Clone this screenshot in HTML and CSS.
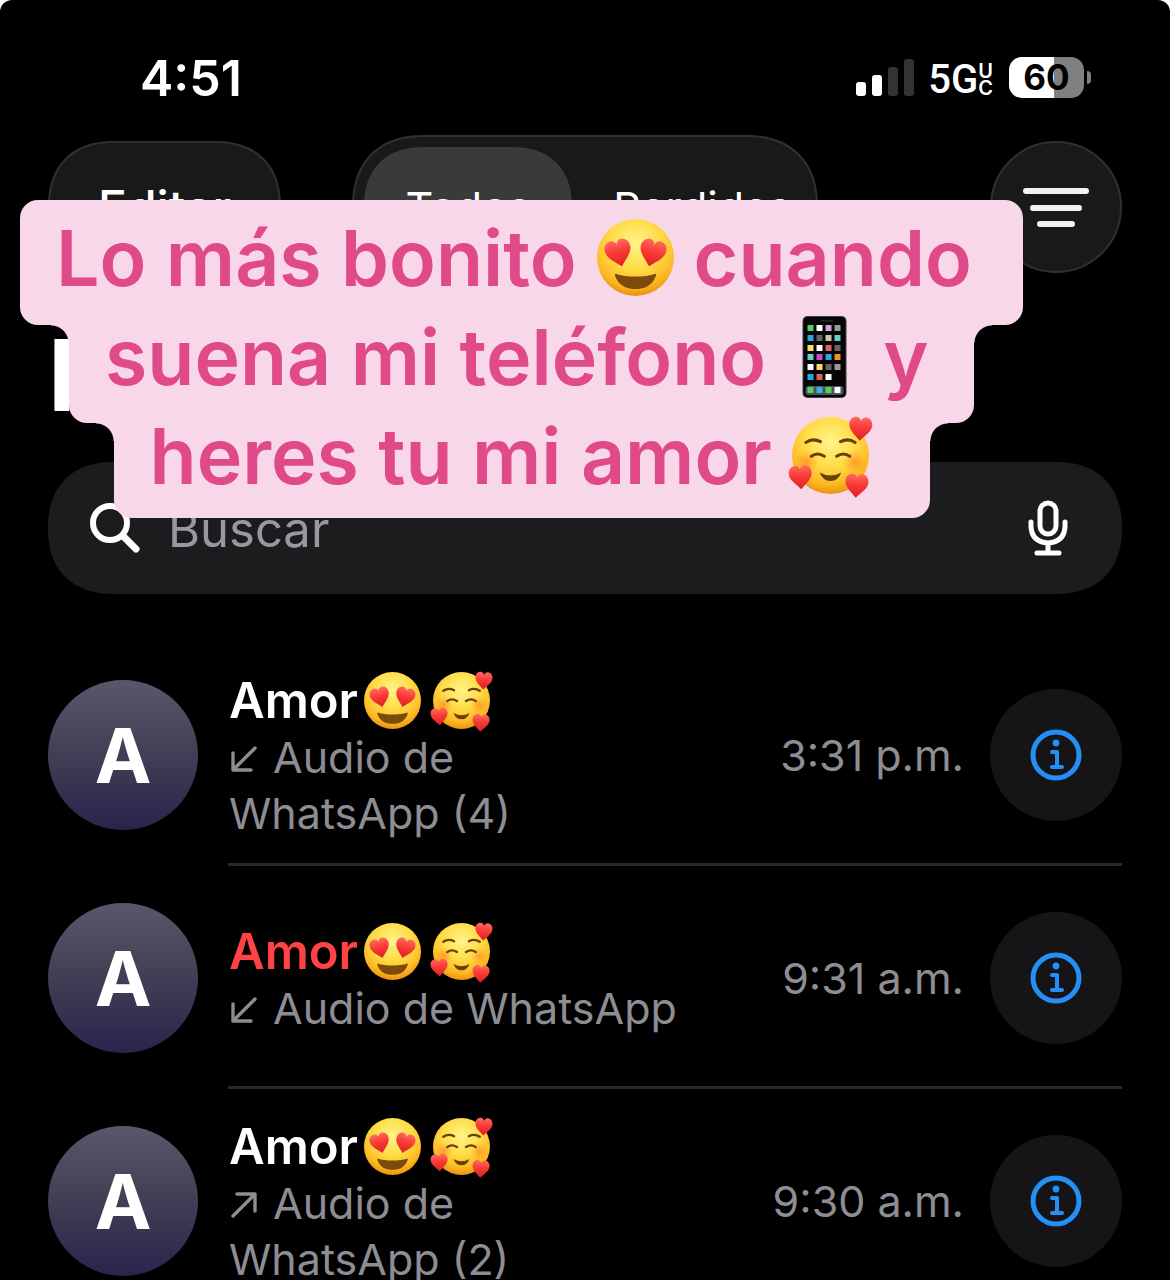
FILE: index.html
```html
<!DOCTYPE html>
<html lang="es">
<head>
    <meta charset="UTF-8">
    <meta name="viewport" content="width=device-width, initial-scale=1.0">
    <title>Recientes</title>
    <link rel="stylesheet" href="styles.css">
</head>
<body>
    <!-- Shared icons -->
    <svg class="sprite" aria-hidden="true">
        <defs>
            <radialGradient id="face" cx="50%" cy="32%" r="68%">
                <stop offset="0" stop-color="#fff48a"/>
                <stop offset="0.5" stop-color="#ffdb45"/>
                <stop offset="0.82" stop-color="#fdb822"/>
                <stop offset="1" stop-color="#e9920f"/>
            </radialGradient>
            <linearGradient id="heart-fill" x1="0" y1="0" x2="0" y2="1">
                <stop offset="0" stop-color="#ff6a62"/>
                <stop offset="0.45" stop-color="#f93a35"/>
                <stop offset="1" stop-color="#dc1f26"/>
            </linearGradient>
            <radialGradient id="blush">
                <stop offset="0" stop-color="#ff7a1c" stop-opacity="0.6"/>
                <stop offset="1" stop-color="#ff8a1c" stop-opacity="0"/>
            </radialGradient>
            <path id="heart" d="M0 18C-6 11-17 4-17-6C-17-13-12-17-7-17C-4-17-1-15 0-11C1-15 4-17 7-17C12-17 17-13 17-6C17 4 6 11 0 18Z" fill="url(#heart-fill)"/>
        </defs>
        <symbol id="heart-eyes" viewBox="0 0 100 100">
            <circle cx="50" cy="50" r="50" fill="url(#face)"/>
            <use href="#heart" transform="translate(28 44) rotate(-14)"/>
            <use href="#heart" transform="translate(72 44) rotate(14)"/>
            <path d="M24 71C38 76 62 76 76 71C77 72 77 73 76 75C72 86 62 91 50 91C38 91 28 86 24 75C23 73 23 72 24 71Z" fill="#7c4a0b"/>
        </symbol>
        <symbol id="loving" viewBox="0 0 100 100" overflow="visible">
            <circle cx="50" cy="50" r="50" fill="url(#face)"/>
            <circle cx="19" cy="58" r="16" fill="url(#blush)"/>
            <circle cx="81" cy="58" r="16" fill="url(#blush)"/>
            <g fill="none" stroke="#6b3f0a" stroke-width="4" stroke-linecap="round">
                <path d="M18 33Q27 27 37 32"/>
                <path d="M63 32Q73 27 82 33"/>
                <path d="M25 51Q33 45 42 51"/>
                <path d="M58 51Q67 45 75 51"/>
            </g>
            <path d="M36 72Q50 80 64 72Q60 83 50 83Q40 83 36 72Z" fill="#6b3f0a"/>
            <use href="#heart" transform="translate(89 15) rotate(4) scale(0.88)"/>
            <use href="#heart" transform="translate(11 78) rotate(-4) scale(0.88)"/>
            <use href="#heart" transform="translate(84 89) rotate(4) scale(0.88)"/>
        </symbol>
        <symbol id="phone" viewBox="0 0 44 82">
            <rect width="44" height="82" rx="5" fill="#3c4043"/>
            <rect x="1" y="1" width="42" height="80" rx="4" fill="#050505"/>
            <rect x="18" y="4" width="13" height="2" rx="1" fill="#222"/>
            <rect x="3" y="70" width="38" height="9" rx="3" fill="#4d5254"/>
            <g stroke-width="6">
                <path d="M5 12h6" stroke="#4ed45e"/>
                <path d="M14 12h6M14 32h6M5 51h6M23 61h6" stroke="#fff"/>
                <path d="M23 12h6" stroke="#d3a3e4"/>
                <path d="M32 12h6M32 51h6" stroke="#999"/>
                <path d="M5 22h6M23 41h6M5 61h6" stroke="#27a5e8"/>
                <path d="M14 22h6M32 32h6M23 51h6" stroke="#666"/>
                <path d="M23 22h6" stroke="#d8c3a5"/>
                <path d="M32 22h6M5 41h6" stroke="#5cced5"/>
                <path d="M5 32h6M14 51h6" stroke="#f2df6a"/>
                <path d="M23 32h6M14 61h6" stroke="#e2605c"/>
                <path d="M14 41h6" stroke="#c84ad2"/>
                <path d="M32 41h6" stroke="#f0941d"/>
                <path d="M5 74h6M23 74h6" stroke="#4ed45e"/>
                <path d="M14 74h6" stroke="#31b3e8"/>
                <path d="M32 74h6" stroke="#fff"/>
            </g>
        </symbol>
        <symbol id="info" viewBox="0 0 52 52">
            <circle cx="26" cy="26" r="23" fill="none" stroke="currentColor" stroke-width="5"/>
            <circle cx="26" cy="14" r="3.400" fill="currentColor"/>
            <path d="M22 23h5v15M22 38h10" fill="none" stroke="currentColor" stroke-width="4" stroke-linecap="round" stroke-linejoin="round"/>
        </symbol>
        <symbol id="arrow-in" viewBox="0 0 28 28">
            <path d="M26 3L4 25M4 8V25H22" fill="none" stroke="currentColor" stroke-width="3.400" stroke-linecap="round" stroke-linejoin="round"/>
        </symbol>
        <symbol id="arrow-out" viewBox="0 0 28 28">
            <path d="M4 25L26 3M8 3H26V20" fill="none" stroke="currentColor" stroke-width="3.400" stroke-linecap="round" stroke-linejoin="round"/>
        </symbol>
    </svg>

    <div class="phone">
        <div class="status-bar">
            <span class="clock">4:51</span>
            <div class="status-icons">
                <svg class="signal" viewBox="0 0 58 38" role="img" aria-label="Señal">
                    <rect x="0" y="23" width="10" height="14" rx="3" fill="#fff"/>
                    <rect x="16" y="16" width="10" height="21" rx="3" fill="#fff"/>
                    <rect x="32" y="8" width="10" height="29" rx="3" fill="#333"/>
                    <rect x="48" y="0" width="10" height="37" rx="3" fill="#333"/>
                </svg>
                <span class="network">5G</span>
                <span class="network-type"><span>U</span><span>C</span></span>
                <span class="battery">60</span>
                <span class="battery-cap"></span>
            </div>
        </div>

        <div class="toolbar">
            <button class="glass edit">Editar</button>
            <div class="glass segments">
                <button class="segment active">Todos</button>
                <button class="segment missed">Perdidas</button>
            </div>
            <button class="glass filter" aria-label="Filtrar">
                <svg viewBox="0 0 66 40">
                    <path d="M3 4H63M10 21H56M17 37H49" stroke="#f2f2f2" stroke-width="6" stroke-linecap="round"/>
                </svg>
            </button>
        </div>

        <h1>Recientes</h1>

        <div class="search">
            <svg class="search-icon" viewBox="0 0 50 50">
                <circle cx="20" cy="20" r="17" fill="none" stroke="#fff" stroke-width="6"/>
                <path d="M33 33L46 46" stroke="#fff" stroke-width="7" stroke-linecap="round"/>
            </svg>
            <input type="text" placeholder="Buscar" aria-label="Buscar">
            <button class="mic" aria-label="Dictar">
                <svg viewBox="0 0 38 56">
                    <g fill="none" stroke="#fff" stroke-width="5" stroke-linecap="round">
                        <rect x="11" y="3" width="16" height="31" rx="8"/>
                        <path d="M2 22V27Q3 42 19 43Q35 42 36 27V22M19 43V52M8 53H30"/>
                    </g>
                </svg>
            </button>
        </div>

        <ul class="calls">
            <li class="call">
                <span class="avatar">A</span>
                <div class="details">
                    <div class="name">Amor <svg role="img" aria-label="😍"><use href="#heart-eyes"/></svg><svg role="img" aria-label="🥰"><use href="#loving"/></svg></div>
                    <div class="type"><svg><use href="#arrow-in"/></svg>Audio de WhatsApp&nbsp;(4)</div>
                </div>
                <time>3:31 p.m.</time>
                <button class="info" aria-label="Información"><svg><use href="#info"/></svg></button>
            </li>
            <li class="call">
                <span class="avatar">A</span>
                <div class="details">
                    <div class="name lost">Amor <svg role="img" aria-label="😍"><use href="#heart-eyes"/></svg><svg role="img" aria-label="🥰"><use href="#loving"/></svg></div>
                    <div class="type"><svg><use href="#arrow-in"/></svg>Audio de WhatsApp</div>
                </div>
                <time>9:31 a.m.</time>
                <button class="info" aria-label="Información"><svg><use href="#info"/></svg></button>
            </li>
            <li class="call">
                <span class="avatar">A</span>
                <div class="details">
                    <div class="name">Amor <svg role="img" aria-label="😍"><use href="#heart-eyes"/></svg><svg role="img" aria-label="🥰"><use href="#loving"/></svg></div>
                    <div class="type"><svg><use href="#arrow-out"/></svg>Audio de WhatsApp&nbsp;(2)</div>
                </div>
                <time>9:30 a.m.</time>
                <button class="info" aria-label="Información"><svg><use href="#info"/></svg></button>
            </li>
        </ul>

        <!-- Caption over the screen -->
        <div class="caption">
            <div class="line first">Lo más bonito <svg role="img" aria-label="😍"><use href="#heart-eyes"/></svg> cuando</div>
            <div class="line second">suena mi teléfono <svg role="img" aria-label="📱"><use href="#phone"/></svg> y</div>
            <div class="line third">heres tu mi amor <svg role="img" aria-label="🥰"><use href="#loving"/></svg></div>
        </div>
    </div>
</body>
</html>
```
FILE: styles.css
```css
* {
    box-sizing: border-box;
}
html {
    background-color: #fff;
}
body {
    margin: 0;
    font-family: Inter, "Liberation Sans", sans-serif;
    color: #fff;
}
button {
    border: none;
    padding: 0;
    font-family: inherit;
    color: inherit;
    cursor: pointer;
}
svg {
    display: block;
    overflow: visible;
}
.sprite {
    position: absolute;
    width: 0;
    height: 0;
}
.phone {
    position: relative;
    height: 100vh;
    overflow: hidden;
    background-color: #000;
    border-radius: 12px 12px 0 0;
}

/* Status bar */
.status-bar {
    display: flex;
    justify-content: space-between;
    align-items: center;
    height: 135px;
    padding: 20px 79px 0 140px;
}
.clock {
    font-size: 50px;
    font-weight: 600;
}
.status-icons {
    display: flex;
    align-items: center;
}
.signal {
    width: 58px;
    height: 38px;
    margin-right: 14px;
}
.network {
    padding-top: 4px;
    font-family: Roboto, sans-serif;
    font-size: 40px;
    font-weight: 500;
    line-height: 40px;
}
.network-type {
    display: flex;
    flex-direction: column;
    margin-right: 16px;
    padding-top: 4px;
    font-size: 20px;
    font-weight: 600;
    line-height: 17px;
}
.battery {
    width: 75px;
    height: 41px;
    border-radius: 13px;
    background: linear-gradient(to right, #fff 60%, #808080 60%);
    color: #000;
    font-size: 35px;
    font-weight: 700;
    line-height: 41px;
    text-align: center;
}
.battery-cap {
    width: 4px;
    height: 13px;
    margin-left: 3px;
    border-radius: 0 6px 6px 0;
    background-color: #808080;
}

/* Toolbar */
.toolbar {
    display: grid;
    grid-template-columns: 1fr auto 1fr;
    align-items: center;
    padding: 0 48px;
}
.glass {
    background-color: #191919;
    border: 2px solid #303030;
}
.edit {
    width: 233px;
    height: 132px;
    border-radius: 66px;
    corner-shape: superellipse(1.2);
    font-size: 48px;
    font-weight: 500;
}
.segments {
    display: flex;
    width: 466px;
    height: 144px;
    padding: 10px;
    border-radius: 72px;
    corner-shape: superellipse(1.2);
}
.segment {
    flex: 1;
    background: none;
    font-size: 43px;
}
.active {
    flex: 0 0 208px;
    border-radius: 60px;
    corner-shape: superellipse(1.2);
    background-color: #3a3a3a;
}
.missed {
    padding-left: 26px;
}
.filter {
    display: flex;
    align-items: center;
    justify-content: center;
    justify-self: end;
    width: 132px;
    height: 132px;
    border-radius: 50%;
}
.filter svg {
    width: 66px;
    height: 40px;
}
h1 {
    margin: 36px 48px 27px;
    font-size: 99px;
    font-weight: 700;
    line-height: 120px;
}

/* Search */
.search {
    display: flex;
    align-items: center;
    height: 132px;
    margin: 0 48px;
    padding: 0 55px 0 42px;
    border-radius: 66px;
    corner-shape: superellipse(1.2);
    background-color: #1c1c1e;
}
.search-icon {
    width: 50px;
    height: 50px;
}
.search input {
    flex: 1;
    min-width: 0;
    padding: 3px 0 0;
    margin-left: 28px;
    border: none;
    outline: none;
    background: none;
    color: #fff;
    font-family: inherit;
    font-size: 49px;
}
.search input::placeholder {
    color: #98989f;
    opacity: 1;
}
.mic {
    background: none;
}
.mic svg {
    width: 38px;
    height: 56px;
}

/* Call list */
.calls {
    list-style: none;
    margin: 49px 48px 0;
    padding: 0;
}
.call {
    position: relative;
    display: flex;
    align-items: center;
    height: 223px;
}
.call::after {
    content: "";
    position: absolute;
    left: 180px;
    right: 0;
    bottom: 0;
    height: 3px;
    background-color: #29292b;
}
.avatar {
    flex: none;
    width: 150px;
    height: 150px;
    border-radius: 50%;
    background: linear-gradient(#5a566b, #454056 45%, #2c234b);
    font-size: 76px;
    font-weight: 700;
    line-height: 150px;
    text-align: center;
}
.details {
    flex: 1;
    margin: 0 40px 0 31px;
    padding-top: 4px;
}
.name {
    display: flex;
    align-items: center;
    font-size: 49px;
    font-weight: 600;
    line-height: 56px;
}
.name svg {
    width: 57px;
    height: 57px;
    margin-left: 6px;
}
.name svg + svg {
    margin-left: 12px;
}
.lost {
    color: #ff4245;
}
.type {
    font-size: 43px;
    line-height: 56px;
    color: #8d8d93;
}
.type svg {
    display: inline-block;
    width: 28px;
    height: 28px;
    margin-right: 16px;
}
time {
    font-size: 43px;
    color: #8d8d93;
    white-space: nowrap;
}
.info {
    display: flex;
    align-items: center;
    justify-content: center;
    flex: none;
    width: 132px;
    height: 132px;
    margin-left: 26px;
    border-radius: 50%;
    background-color: #151517;
    color: #2490f5;
}
.info svg {
    width: 52px;
    height: 52px;
}

/* Caption */
.caption {
    position: absolute;
    top: 200px;
    left: 20px;
    display: flex;
    flex-direction: column;
    align-items: center;
    color: #e04a89;
    font-size: 77px;
    font-weight: 600;
    line-height: 60px;
}
.line {
    position: relative;
    display: flex;
    align-items: center;
    gap: 20px;
    height: 98px;
    padding: 0 36px 34px;
    background-color: #f8d7e8;
    border-radius: 0 0 18px 18px;
    white-space: nowrap;
}
.first {
    width: 1003px;
    height: 125px;
    border-radius: 18px;
    padding-bottom: 10px;
}
.second {
    width: 905px;
}
.third {
    width: 816px;
    height: 95px;
    padding-bottom: 30px;
}
/* Inner corners where a line is narrower than the one above */
.second::before,
.second::after,
.third::before,
.third::after {
    content: "";
    position: absolute;
    top: 0;
    width: 18px;
    height: 18px;
}
.second::before,
.third::before {
    right: 100%;
    background: radial-gradient(circle at 0 100%, transparent 17px, #f8d7e8 18px);
}
.second::after,
.third::after {
    left: 100%;
    background: radial-gradient(circle at 100% 100%, transparent 17px, #f8d7e8 18px);
}
.line svg {
    flex: none;
    width: 77px;
    height: 77px;
}
.second svg {
    height: 82px;
}
```
